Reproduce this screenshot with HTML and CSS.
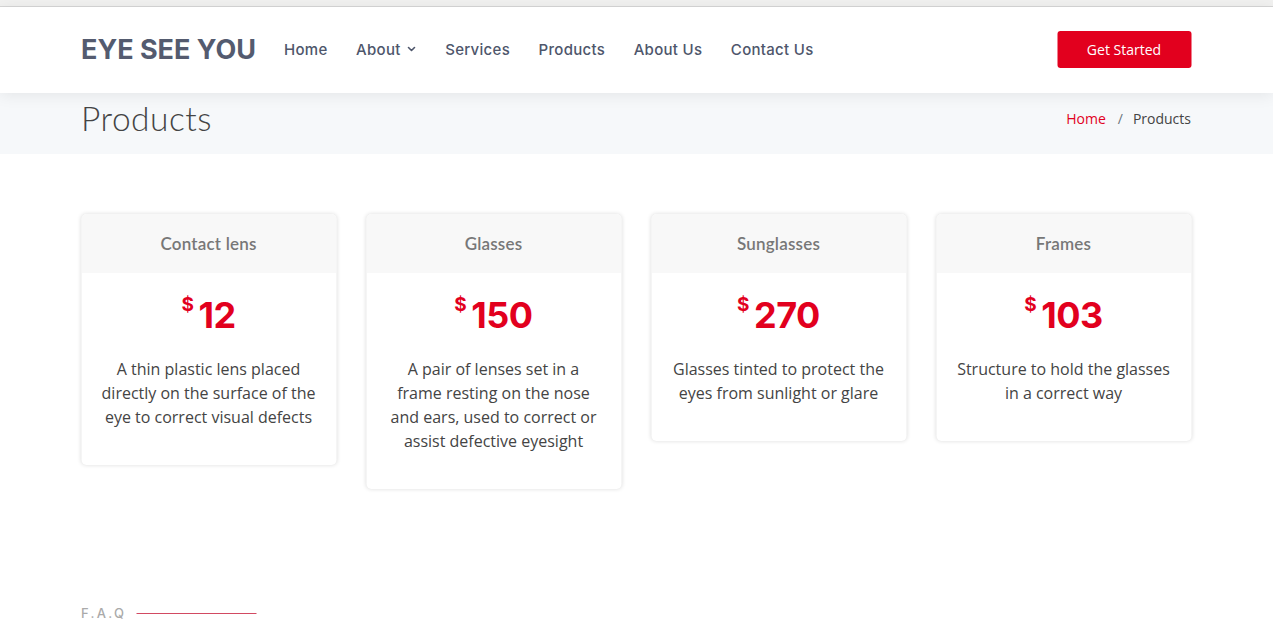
FILE: index.html
```html
<!DOCTYPE html>
<html lang="en">
<head>
<meta charset="utf-8">
<title>Products - Eye See You</title>
<link rel="stylesheet" href="styles.css">
</head>
<body>
<div class="topstrip"></div>
<header class="header">
  <div class="container header-inner">
    <a class="logo" href="#">EYE SEE YOU</a>
    <nav class="nav">
      <a href="#">Home</a>
      <a href="#" class="dropdown">About
        <svg class="chev" width="10" height="10" viewBox="0 0 10 10"><path d="M2 3.5 L5 6.5 L8 3.5" fill="none" stroke="currentColor" stroke-width="1.6" stroke-linecap="round" stroke-linejoin="round"/></svg>
      </a>
      <a href="#">Services</a>
      <a href="#">Products</a>
      <a href="#">About Us</a>
      <a href="#">Contact Us</a>
    </nav>
    <a class="btn" href="#">Get Started</a>
  </div>
</header>

<section class="breadcrumbs">
  <div class="container bc-inner">
    <h2>Products</h2>
    <ol>
      <li><a href="#">Home</a></li>
      <li class="sep">/</li>
      <li>Products</li>
    </ol>
  </div>
</section>

<section class="pricing">
  <div class="container grid">
    <div class="card">
      <h3>Contact lens</h3>
      <div class="body">
        <h4><sup>$</sup>12</h4>
        <p>A thin plastic lens placed directly on the surface of the eye to correct visual defects</p>
      </div>
    </div>
    <div class="card">
      <h3>Glasses</h3>
      <div class="body">
        <h4><sup>$</sup>150</h4>
        <p>A pair of lenses set in a frame resting on the nose and ears, used to correct or assist defective eyesight</p>
      </div>
    </div>
    <div class="card">
      <h3>Sunglasses</h3>
      <div class="body">
        <h4><sup>$</sup>270</h4>
        <p>Glasses tinted to protect the eyes from sunlight or glare</p>
      </div>
    </div>
    <div class="card">
      <h3>Frames</h3>
      <div class="body">
        <h4><sup>$</sup>103</h4>
        <p>Structure to hold the glasses in a correct way</p>
      </div>
    </div>
  </div>
</section>

<section class="faq">
  <div class="container">
    <h2 class="faq-title">F.A.Q</h2>
  </div>
</section>
</body>
</html>
```

FILE: styles.css
```css
* { box-sizing: border-box; }
html, body { margin: 0; padding: 0; }
body {
  font-family: "Open Sans", "Noto Sans", sans-serif;
  color: #444444;
  background: #fff;
  overflow: hidden;
}
a { text-decoration: none; color: inherit; }

.container {
  width: 1110px;
  margin: 0 auto;
  transform: translateX(-0.5px);
}

.topstrip {
  height: 7px;
  background: #f1f1f0;
  border-bottom: 1px solid #d6d6d6;
}

.header {
  height: 86px;
  background: #fff;
  box-shadow: 0 2px 15px rgba(0, 0, 0, 0.08);
  position: relative;
  z-index: 2;
}
.header-inner {
  height: 100%;
  display: flex;
  align-items: center;
  padding-bottom: 2px;
}
.logo {
  font-family: "Inter", "Lato", sans-serif;
  font-size: 27px;
  font-weight: 700;
  letter-spacing: 0;
  color: #545b6f;
}
.nav {
  display: flex;
  align-items: center;
  margin-left: 28px;
  gap: 28.5px;
}
.nav a {
  font-family: "Inter", "Noto Sans", sans-serif;
  font-size: 15px;
  font-weight: 500;
  color: #4e566b;
  display: flex;
  align-items: center;
  letter-spacing: 0.3px;
}
.nav .chev { margin-left: 6px; }

.btn {
  margin-left: auto;
  width: 134px;
  height: 37px;
  background: #e2001e;
  color: #fff;
  border-radius: 3px;
  font-size: 14px;
  display: flex;
  align-items: center;
  justify-content: center;
}

.breadcrumbs {
  background: #f6f8fa;
  height: 61px;
}
.bc-inner {
  height: 100%;
  display: flex;
  align-items: center;
  justify-content: space-between;
}
.breadcrumbs h2 {
  margin: -12px 0 0 0;
  font-family: "Lato", "Open Sans", sans-serif;
  font-weight: 300;
  font-size: 33.5px;
  letter-spacing: 0.5px;
  color: #444;
}
.breadcrumbs ol {
  list-style: none;
  margin: -10px 0 0 0;
  padding: 0;
  display: flex;
  font-size: 14px;
  color: #444;
}
.breadcrumbs ol a { color: #e2001e; }
.breadcrumbs .sep { color: #6c757d; padding: 0 10px 0 12px; }

.pricing {
  padding: 60px 0 60px;
}
.grid {
  display: grid;
  grid-template-columns: repeat(4, 255px);
  gap: 30px;
  align-items: start;
}
.card {
  background: #fff;
  border-radius: 5px;
  box-shadow: 0 0 4px rgba(0, 0, 0, 0.14);
  overflow: hidden;
  text-align: center;
}
.card h3 {
  margin: 0;
  background: #f8f8f8;
  height: 59px;
  display: flex;
  align-items: center;
  justify-content: center;
  font-family: "Lato", "Open Sans", sans-serif;
  font-weight: 600;
  font-size: 17px;
  letter-spacing: 0.2px;
  color: #777777;
}
.card .body {
  padding: 14px 20px 36px;
}
.card h4 {
  margin: 0;
  font-family: "Inter", "Noto Sans", sans-serif;
  font-weight: 700;
  font-size: 36px;
  line-height: 44px;
  color: #e2001e;
  letter-spacing: -0.5px;
}
.card h4 sup {
  font-size: 19px;
  font-weight: 700;
  position: relative;
  top: -4px;
  margin-right: 5px;
}
.card p {
  margin: 20px 0 0;
  font-size: 16px;
  line-height: 24px;
  color: #444;
}

.faq {
  padding-top: 56px;
}
.faq-title {
  margin: 0;
  display: flex;
  align-items: center;
  font-family: "Inter", "Noto Sans", sans-serif;
  font-size: 13px;
  font-weight: 500;
  letter-spacing: 2.3px;
  color: #aaaaaa;
}
.faq-title::after {
  content: "";
  width: 120px;
  height: 1px;
  background: #d24a62;
  margin-left: 10px;
}
```
